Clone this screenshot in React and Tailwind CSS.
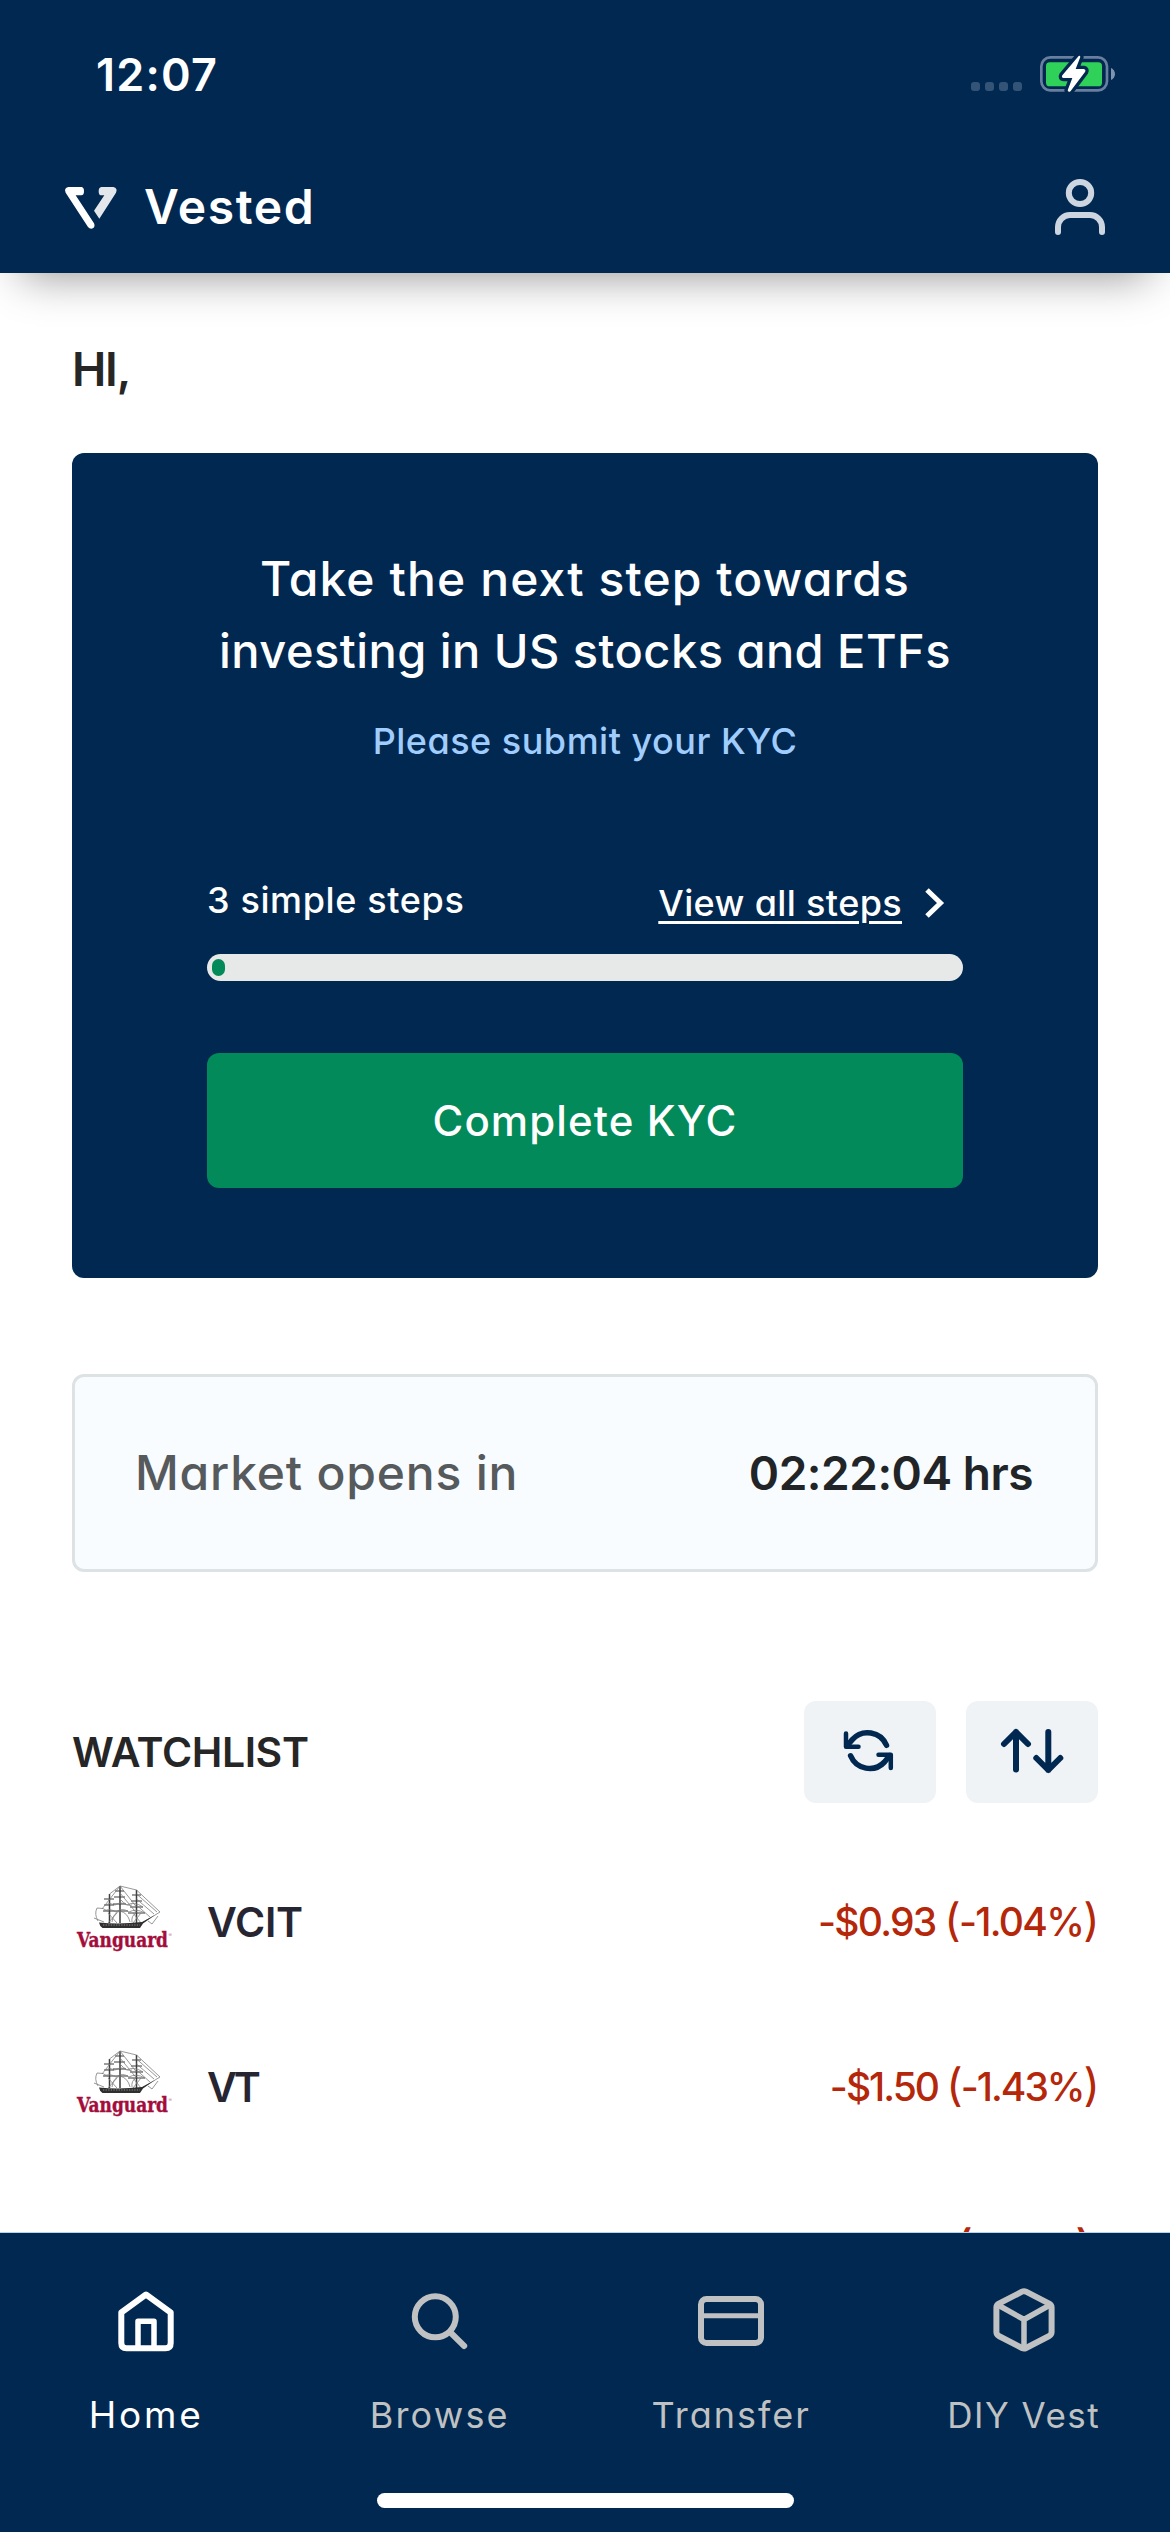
import React from "react";

function BatteryIcon() {
  return (
    <svg className="h-[60px] w-[100px]" viewBox="0 0 300 180" fill="none">
      <rect x="34" y="37" width="197" height="99" rx="27" stroke="#6a7f9f" strokeWidth="8" />
      <rect x="48" y="52" width="168" height="72" rx="11" fill="#30d158" />
      <path d="M243 69C259 75 259 99 243 105Z" fill="#7f93ae" />
      <path
        d="M146 33L97 91Q93 98 101 99H127L113 136Q116 144 122 138L165 81Q169 74 161 72H137L151 36Q150 30 146 33Z"
        fill="#fff"
        stroke="#012850"
        strokeWidth="20"
        strokeLinejoin="round"
        paintOrder="stroke"
      />
    </svg>
  );
}

function VestedMark() {
  return (
    <svg className="h-[60px] w-[70px]" viewBox="0 0 210 180">
      <path
        d="M25 30H65Q72 31 72 43Q72 55 64 55H47L102 139Q106 148 100 153Q91 158 84 150L17 47Q11 33 25 30Z"
        fill="#fff"
      />
      <path
        d="M124 30H160Q174 33 168 47L118 125L102 101L133 55H122Q116 54 116 43Q116 31 124 30Z"
        fill="#e3e6ea"
      />
    </svg>
  );
}

function UserIcon() {
  return (
    <svg className="h-[62px] w-14" viewBox="0 0 56 62" fill="none" stroke="#ccd5e0" strokeWidth="6" strokeLinecap="round">
      <ellipse cx="28" cy="17" rx="11.2" ry="11" />
      <path d="M6 56v-5a12 12 0 0 1 12-12h20a12 12 0 0 1 12 12v5" />
    </svg>
  );
}

function RefreshIcon() {
  return (
    <svg className="size-[60px]" viewBox="0 0 60 60" fill="none" stroke="#012850" strokeLinecap="round" strokeLinejoin="round">
      <g strokeWidth="4.5">
        <path d="M6 11.5v13.3h12.5" />
        <path d="M50.8 46v-13.3H38.5" />
      </g>
      <g strokeWidth="5.5">
        <path d="M7 23.8L12.3 17.6A20.5 20.5 0 0 1 46.5 23.3" />
        <path d="M49.8 33.6L44.5 40A20.5 20.5 0 0 1 10.6 33.8" />
      </g>
    </svg>
  );
}

function SortIcon() {
  return (
    <svg className="h-[60px] w-[70px]" viewBox="0 0 70 60" fill="none" stroke="#012850" strokeWidth="6" strokeLinecap="round" strokeLinejoin="round">
      <path d="M19 47.5V10M7 22L19 10l12 12" />
      <path d="M51.3 10v38M39.3 36l12 12 12-12" />
    </svg>
  );
}

function HomeIcon() {
  return (
    <svg className="h-[66px] w-[60px]" viewBox="0 0 60 66" fill="none" stroke="#fff" strokeWidth="6" strokeLinejoin="round">
      <path d="M30 6.5L54.7 24.5V55Q54.7 60.3 49.5 60.3H10.5Q5.3 60.3 5.3 55V24.5Z" />
      <path d="M22 60V33.3H38V60" strokeWidth="5.5" />
    </svg>
  );
}

function SearchIcon() {
  return (
    <svg className="h-[66px] w-[60px]" viewBox="0 0 60 66" fill="none" stroke="#bfc1c2" strokeWidth="6" strokeLinecap="round">
      <circle cx="26.3" cy="28.8" r="20.5" />
      <path d="M41.5 44.5L55.2 58" />
    </svg>
  );
}

function CardIcon() {
  return (
    <svg className="h-[66px] w-[70px]" viewBox="0 0 70 66" fill="none" stroke="#bfc1c2" strokeWidth="6">
      <rect x="5" y="11" width="60" height="44" rx="5.5" />
      <path d="M5 27.7H65" strokeWidth="5" />
    </svg>
  );
}

function BoxIcon() {
  return (
    <svg className="h-[66px] w-16" viewBox="0 0 64 66" fill="none" stroke="#bfc1c2" strokeWidth="6" strokeLinecap="round" strokeLinejoin="round">
      <path d="M34 3.7L57.2 15.6Q59.6 17 59.6 19.6V44Q59.6 46.6 57.2 48L34 60Q32 61 30 60L6.8 48Q4.4 46.6 4.4 44V19.6Q4.4 17 6.8 15.6L30 3.7Q32 2.7 34 3.7Z" />
      <path d="M6 17L32 31.5L58 17M32 31.5V60" strokeWidth="5.5" />
    </svg>
  );
}

function VanguardLogo() {
  return (
    <svg className="mb-[5px] h-[70px] w-[110px] overflow-visible" viewBox="0 0 110 70" fill="none">
      <g stroke="#3c3c3c" strokeWidth="1.5">
        <path d="M37.5 9V38M48 1V38M64.5 5V38" />
        <path d="M32 14h10M32 20h10M31 26h12M43 6h9M42 12h11M41 19h13M40 26h16M60 10h9M59 16h11M58 22h13M56 28h17" strokeWidth="1.2" />
      </g>
      <g stroke="#7d7d7d" strokeWidth="0.8">
        <path d="M37.5 9L48 1L64.5 5L88 27L70 38" />
        <path d="M64.5 9L85 27M64.5 14L82 29M64.5 20L78 32M48 1L64.5 22M48 8L64.5 28M48 14Q55 22 60 20" />
        <path d="M48 1L30 24M25 23Q22 29 26 36M25 23Q31 22 37 27M22 33L32 37M48 26Q41 28 40 37M48 26Q56 28 58 37M64 28Q59 31 60 37M36 28L45 38M45 28L36 38M61 28L69 38M69 28L61 38" />
        <path d="M32 26Q38 23 44 27Q50 22 57 27Q64 23 73 28M33 20Q38 17 43 20Q49 16 55 20Q62 16 71 22M76 36l4 3 6-8" />
      </g>
      <path d="M27 37.5Q48 39.5 70 37L83 30L71 38.5L68 43H30.5Q27.5 41 27 37.5Z" fill="#2f2f2f" />
      <path d="M31 40H68" stroke="#a5a5a5" strokeWidth="0.8" strokeDasharray="1.3 1.3" />
      <text
        x="5"
        y="62"
        textLength="91"
        lengthAdjust="spacingAndGlyphs"
        fill="#a30d3c"
        stroke="#a30d3c"
        strokeWidth="0.4"
        fontSize="20.5"
        className="font-['DejaVu_Serif',serif] font-bold"
      >
        Vanguard
      </text>
      <text x="96.5" y="52" fill="#c77a90" fontSize="5" className="font-['Inter',sans-serif]">
        ®
      </text>
    </svg>
  );
}

function Change({ amount, percent, className }) {
  return (
    <span className={"flex items-baseline whitespace-pre text-[39px] leading-none font-medium text-[#b5270a] " + className}>
      {amount}{" "}
      <span className="text-[45px] leading-none font-normal">(</span>
      {percent}
      <span className="text-[45px] leading-none font-normal">)</span>
    </span>
  );
}

function Stock({ symbol, logo, tracking, children }) {
  return (
    <div className="flex h-[165px] shrink-0 items-center">
      <div className="w-[135px]">{logo}</div>
      <span className={"flex-1 text-[41px] leading-none font-semibold text-[#272532] " + tracking}>{symbol}</span>
      {children}
    </div>
  );
}

function Tab({ icon, label, className }) {
  return (
    <div className="flex flex-1 flex-col items-center">
      {icon}
      <span className={"mt-[39px] h-11 leading-[44px] " + className}>{label}</span>
    </div>
  );
}

export default function App() {
  return (
    <div className="flex h-[2532px] w-[1170px] flex-col overflow-hidden bg-white font-['Inter',sans-serif] [font-feature-settings:'cv11']">
      <header className="z-10 flex h-[273px] shrink-0 flex-col bg-[#012850] shadow-[0_24px_42px_-21px_rgba(0,0,0,0.42)]">
        <div className="flex h-[149px] items-center pr-10 pl-24 text-white">
          <span className="flex-1 text-[45px] leading-none font-semibold tracking-[1.2px]">12:07</span>
          <div className="mt-6 mr-2 flex gap-[5px]">
            <i className="size-[9px] rounded-[3px] bg-[#335477]" />
            <i className="size-[9px] rounded-[3px] bg-[#335477]" />
            <i className="size-[9px] rounded-[3px] bg-[#335477]" />
            <i className="size-[9px] rounded-[3px] bg-[#335477]" />
          </div>
          <BatteryIcon />
        </div>
        <div className="flex h-[116px] items-center pr-[62px] pl-[60px]">
          <VestedMark />
          <span className="ml-3.5 flex-1 text-[48px] leading-none font-semibold tracking-[1.6px] text-white">Vested</span>
          <UserIcon />
        </div>
      </header>

      <main className="flex min-h-0 flex-1 flex-col overflow-hidden px-[72px] pt-[66px]">
        <h1 className="h-[60px] shrink-0 text-[46px] leading-[60px] font-semibold tracking-[-1.2px] text-[#262626]">HI,</h1>

        <section className="mt-[54px] h-[825px] shrink-0 rounded-xl bg-[#012850] px-[135px] pt-[90px] text-white">
          <h2 className="flex flex-col items-center text-[47px] leading-[72px] font-medium whitespace-nowrap">
            <span className="text-[48px] tracking-[1.1px]">Take the next step towards</span>
            <span className="tracking-[0.45px]">investing in US stocks and ETFs</span>
          </h2>
          <p className="mt-[29px] text-center text-[36px] leading-[50px] font-medium tracking-[0.5px] text-[#a0cdfd]">
            Please submit your KYC
          </p>
          <div className="mt-[109px] flex h-14 items-start justify-between text-[36px] font-medium">
            <span className="leading-[50px] tracking-[0.62px]">3 simple steps</span>
            <span className="flex items-center pr-4 leading-[56px]">
              <span className="tracking-[0.36px] underline decoration-[2.5px] underline-offset-[5px]">View all steps</span>
              <svg className="ml-[21px] h-8 w-6" viewBox="0 0 24 32" fill="none" stroke="#fff" strokeWidth="5">
                <path d="M4 3L17.5 16L4 29" />
              </svg>
            </span>
          </div>
          <div className="mt-[23px] flex h-[27px] items-center rounded-full bg-[#e7e9e8] pl-[5px]">
            <div className="h-[17px] w-[13px] rounded-full bg-[#028a5a]" />
          </div>
          <button className="mt-[72px] block h-[135px] w-full rounded-xl bg-[#028a5a] text-[42px] font-medium tracking-[1.1px]">
            Complete KYC
          </button>
        </section>

        <section className="mt-24 flex h-[198px] shrink-0 items-center justify-between rounded-xl border-3 border-[#dde2e4] bg-[#f8fcff] pr-[62px] pl-[60px] leading-none">
          <span className="text-[48px] font-medium tracking-[0.8px] text-[#565a5c]">Market opens in</span>
          <span className="text-[46px] font-semibold tracking-[-0.48px] text-[#212528]">02:22:04 hrs</span>
        </section>

        <section className="mt-[129px] flex h-[102px] shrink-0 items-center gap-[30px]">
          <h3 className="flex-1 text-[41px] leading-none font-semibold tracking-[-0.4px] text-[#262626]">WATCHLIST</h3>
          <button className="flex h-[102px] w-[132px] items-center justify-center rounded-xl bg-[#eff3f6]">
            <RefreshIcon />
          </button>
          <button className="flex h-[102px] w-[132px] items-center justify-center rounded-xl bg-[#eff3f6]">
            <SortIcon />
          </button>
        </section>

        <div className="mt-[37px] flex flex-col">
          <Stock symbol="VCIT" logo={<VanguardLogo />} tracking="tracking-[-0.3px]">
            <Change amount="-$0.93" percent="-1.04%" className="mb-[6px] tracking-[-1.7px]" />
          </Stock>
          <Stock symbol="VT" logo={<VanguardLogo />} tracking="tracking-[-3px]">
            <Change amount="-$1.50" percent="-1.43%" className="mb-[6px] tracking-[-2px]" />
          </Stock>
          <Stock symbol="" logo={null} tracking="">
            <span className="mb-[15px] flex items-baseline pr-1.5 leading-none text-[#b5270a]">
              <span className="text-[45px] leading-none font-medium">(</span>
              <span className="text-[36px] tracking-[-1px]">-1.17%</span>
              <span className="text-[45px] leading-none font-medium">)</span>
            </span>
          </Stock>
        </div>
      </main>

      <nav className="flex h-[300px] shrink-0 flex-col items-center border-t border-[#b5d3ea] bg-[#012850] pt-[55px]">
        <div className="flex w-full">
          <Tab icon={<HomeIcon />} label="Home" className="text-[37px] tracking-[2.8px] text-white" />
          <Tab icon={<SearchIcon />} label="Browse" className="pl-[2px] text-[36px] tracking-[2.2px] text-[#bfc1c2]" />
          <Tab icon={<CardIcon />} label="Transfer" className="text-[36px] tracking-[2px] text-[#bfc1c2]" />
          <Tab icon={<BoxIcon />} label="DIY Vest" className="text-[35px] tracking-[1.5px] text-[#bfc1c2]" />
        </div>
        <div className="mt-14 h-[15px] w-[417px] rounded-full bg-white" />
      </nav>
    </div>
  );
}
